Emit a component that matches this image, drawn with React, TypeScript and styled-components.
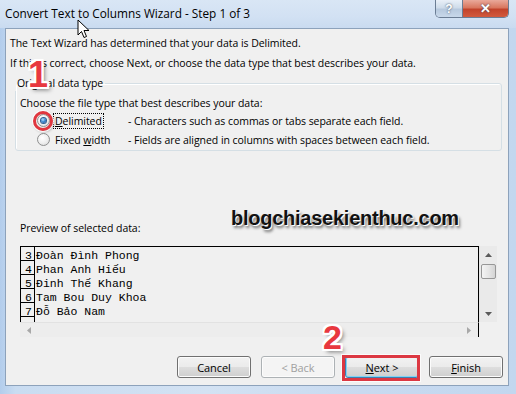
import React from "react";
import styled, { createGlobalStyle } from "styled-components";

const GlobalStyle = createGlobalStyle`
  html, body { margin: 0; padding: 0; }
  body {
    width: 516px;
    height: 394px;
    overflow: hidden;
    font-family: "Open Sans", "Noto Sans", sans-serif;
    color: #000;
  }
`;

const Window = styled.div`
  position: relative;
  width: 516px;
  height: 394px;
  display: flex;
  flex-direction: column;
  background: linear-gradient(90deg, #b3cdec 0%, #c9dcf1 3%, #d3e2f3 40%, #c8daf0 70%, #c2d7ef 100%);
  overflow: hidden;
`;

const TitleBar = styled.div`
  height: 28px;
  flex: none;
  display: flex;
  align-items: flex-start;
  justify-content: space-between;
  background: linear-gradient(180deg, #d9e6f5 0%, #d2e1f3 60%, #c9dbf0 100%);
`;

const Title = styled.div`
  font-size: 11.8px;
  line-height: 16px;
  padding: 5px 0 0 5px;
`;

const Caption = styled.div`
  display: flex;
  margin-right: 7px;
  height: 17px;
  border: 1px solid #6b7d94;
  border-top: none;
  border-radius: 0 0 5px 5px;
  overflow: hidden;
`;

const CaptionButton = styled.div<{ $close?: boolean }>`
  width: ${(p) => (p.$close ? 45 : 26)}px;
  height: 17px;
  display: flex;
  align-items: center;
  justify-content: center;
  font-family: "Liberation Sans", sans-serif;
  font-weight: bold;
  font-size: ${(p) => (p.$close ? 13 : 12)}px;
  color: #fff;
  text-shadow: 0 0 2px #2c3e56;
  background: ${(p) =>
    p.$close
      ? "linear-gradient(180deg, #e9a99a 0%, #d9775f 45%, #c2432b 55%, #d25a3e 100%)"
      : "linear-gradient(180deg, #e9f0f8 0%, #cfdcea 45%, #b7c9de 55%, #c8d8ea 100%)"};
  & + & {
    border-left: 1px solid #6b7d94;
  }
`;

const Client = styled.div`
  flex: 1;
  margin: 0 7px 8px 5px;
  background: #f0f0f0;
  border: 1px solid #8da2bb;
  display: flex;
  flex-direction: column;
  padding: 6px 6px 0 4px;
  font-size: 10.5px;
  letter-spacing: -0.05px;
`;

const Line = styled.div<{ $gap?: number }>`
  height: 16px;
  line-height: 16px;
  margin-top: ${(p) => p.$gap ?? 0}px;
  white-space: nowrap;
`;

const GroupBox = styled.fieldset`
  margin: 4px 0 0 5px;
  padding: 4px 0 1px 4px;
  border: 1px solid #d5dfe5;
  border-radius: 3px;
  box-shadow: inset 1px 1px 0 #fff;
  min-width: 0;
`;

const Legend = styled.legend`
  line-height: 16px;
  padding: 0 2px;
  margin-left: -5px;
`;

const GroupText = styled.div`
  height: 16px;
  line-height: 16px;
`;

const RadioRow = styled.div`
  height: 19px;
  display: grid;
  grid-template-columns: 13px 68px 1fr;
  column-gap: 5px;
  align-items: center;
  padding-left: 17px;
  white-space: nowrap;
`;

const Radio = styled.span<{ $checked?: boolean }>`
  width: 13px;
  height: 13px;
  box-sizing: border-box;
  border-radius: 50%;
  border: 1px solid #8e8f8f;
  background: radial-gradient(circle at 40% 35%, #ffffff 0%, #f0f0f0 50%, #d6d6d6 100%);
  display: flex;
  align-items: center;
  justify-content: center;
  &::after {
    content: "";
    display: ${(p) => (p.$checked ? "block" : "none")};
    width: 5px;
    height: 5px;
    border-radius: 50%;
    background: radial-gradient(circle at 40% 35%, #bfe3ff 0%, #3d8ad2 45%, #134a86 100%);
    box-shadow: 0 0 0 1px #2c5d8f;
  }
`;

const Label = styled.span<{ $focus?: boolean }>`
  justify-self: start;
  line-height: 14px;
  padding: 0 1px;
  margin-left: -1px;
  outline: ${(p) => (p.$focus ? "1px dotted #000" : "none")};
`;

const Key = styled.span`
  text-decoration: underline;
  text-underline-offset: 1px;
`;

const PreviewLabel = styled.div`
  height: 16px;
  line-height: 16px;
  margin: 69px 0 0 10px;
`;

const Preview = styled.div`
  margin: 10px 0 0 10px;
  width: 477px;
  height: 91px;
  display: grid;
  grid-template-columns: 459px 18px;
  grid-template-rows: 76px 15px;
`;

const DataArea = styled.div`
  border: 1px solid #000;
  border-bottom: none;
  overflow: hidden;
  font-family: "Liberation Mono", "DejaVu Sans Mono", monospace;
  font-size: 11.5px;
  letter-spacing: 0;
`;

const DataRow = styled.div`
  display: flex;
  height: 14px;
`;

const RowNum = styled.div`
  width: 14px;
  height: 14px;
  box-sizing: border-box;
  border-right: 1px solid #000;
  border-bottom: 1px solid #000;
  text-align: right;
  padding: 3px 2px 0 0;
  line-height: 12px;
  flex: none;
`;

const RowText = styled.div`
  padding: 3px 0 0 1px;
  line-height: 12px;
  white-space: pre;
`;

const VScroll = styled.div`
  border-left: 1px solid #e6e6e6;
  background: #eaeaea;
  display: flex;
  flex-direction: column;
  align-items: center;
`;

const ArrowBox = styled.div`
  height: 17px;
  width: 17px;
  display: flex;
  align-items: center;
  justify-content: center;
  flex: none;
`;

const Thumb = styled.div`
  width: 15px;
  height: 15px;
  box-sizing: border-box;
  margin-top: 1px;
  border: 1px solid #979797;
  border-radius: 2px;
  background: linear-gradient(90deg, #f4f4f4 0%, #e6e6e6 50%, #d4d4d4 100%);
`;

const Track = styled.div`
  flex: 1;
`;

const HScroll = styled.div`
  border-top: 1px solid #e2e2e2;
  border-right: 1px solid #000;
  background: #ededed;
  display: flex;
  justify-content: space-between;
  align-items: center;
  padding: 0 7px;
`;

const Corner = styled.div`
  background: #f0f0f0;
`;

const ButtonRow = styled.div`
  display: flex;
  justify-content: flex-end;
  gap: 10px;
  margin: 19px -1px 0 0;
`;

const Button = styled.div<{ $disabled?: boolean; $default?: boolean }>`
  width: 74px;
  height: 22px;
  box-sizing: border-box;
  border-radius: 3px;
  display: flex;
  align-items: center;
  justify-content: center;
  font-size: 11px;
  border: 1px solid ${(p) => (p.$disabled ? "#adb2b5" : p.$default ? "#3c7fb1" : "#707070")};
  color: ${(p) => (p.$disabled ? "#a0a0a0" : "#000")};
  background: ${(p) =>
    p.$disabled
      ? "#f4f4f4"
      : "linear-gradient(180deg, #f2f2f2 0%, #ebebeb 48%, #dddddd 52%, #cfcfcf 100%)"};
  box-shadow: ${(p) => (p.$default ? "inset 0 0 0 1px #7fd3f5" : "inset 0 0 0 1px #fcfcfc")};
`;

const Watermark = styled.div`
  position: absolute;
  left: 231px;
  top: 207px;
  font-family: "Liberation Sans", Arial, sans-serif;
  font-weight: bold;
  font-size: 20px;
  color: #121212;
  text-shadow: 1px 1px 0 #fff, 2px 3px 3px rgba(0, 0, 0, 0.55);
  letter-spacing: -0.25px;
`;

const Marker = styled.div<{ $x: number; $y: number; $size: number }>`
  position: absolute;
  left: ${(p) => p.$x}px;
  top: ${(p) => p.$y}px;
  font-family: "Liberation Sans", Arial, sans-serif;
  font-weight: bold;
  font-size: ${(p) => p.$size}px;
  line-height: 1;
  color: #e8383f;
  text-shadow: -2px 0 0 #fff, 2px 0 0 #fff, 0 -2px 0 #fff, 0 2px 0 #fff, -2px -2px 0 #fff,
    2px 2px 0 #fff, -2px 2px 0 #fff, 2px -2px 0 #fff, 3px 3px 4px rgba(0, 0, 0, 0.5);
`;

const Ring = styled.div`
  position: absolute;
  left: 33px;
  top: 111px;
  width: 20px;
  height: 20px;
  box-sizing: border-box;
  border-radius: 50%;
  border: 3px solid #e0373f;
  box-shadow: 0 0 0 1px rgba(255, 255, 255, 0.9), 1px 1px 3px rgba(0, 0, 0, 0.35);
`;

const Highlight = styled.div`
  position: absolute;
  left: 342px;
  top: 355px;
  width: 78px;
  height: 26px;
  box-sizing: border-box;
  border: 3px solid #dc3842;
  box-shadow: 0 0 0 1px rgba(255, 255, 255, 0.7);
`;

const Cursor = styled.svg`
  position: absolute;
  left: 77px;
  top: 19px;
`;

const Tri = ({ dir }: { dir: "up" | "down" | "left" | "right" }) => {
  const pts = {
    up: "0,4 3.5,0 7,4",
    down: "0,0 3.5,4 7,0",
    left: "4,0 0,3.5 4,7",
    right: "0,0 4,3.5 0,7",
  }[dir];
  const vertical = dir === "up" || dir === "down";
  return (
    <svg width={vertical ? 7 : 4} height={vertical ? 4 : 7}>
      <polygon points={pts} fill={vertical ? "#5a5a5a" : "#a8a8a8"} />
    </svg>
  );
};

const rows = [
  ["3", "Đoàn Đình Phong"],
  ["4", "Phan Anh Hiếu"],
  ["5", "Đinh Thế Khang"],
  ["6", "Tam Bou Duy Khoa"],
  ["7", "Đỗ Bảo Nam"],
  ["", ""],
];

export default function App() {
  return (
    <Window>
      <GlobalStyle />
      <TitleBar>
        <Title>Convert Text to Columns Wizard - Step 1 of 3</Title>
        <Caption>
          <CaptionButton>?</CaptionButton>
          <CaptionButton $close>✕</CaptionButton>
        </Caption>
      </TitleBar>
      <Client>
        <Line>The Text Wizard has determined that your data is Delimited.</Line>
        <Line $gap={4}>
          If this is correct, choose Next, or choose the data type that best describes your data.
        </Line>
        <GroupBox>
          <Legend>Original data type</Legend>
          <GroupText>Choose the file type that best describes your data:</GroupText>
          <RadioRow>
            <Radio $checked />
            <Label $focus>
              <Key>D</Key>elimited
            </Label>
            <span>- Characters such as commas or tabs separate each field.</span>
          </RadioRow>
          <RadioRow>
            <Radio />
            <Label>
              Fixed <Key>w</Key>idth
            </Label>
            <span>- Fields are aligned in columns with spaces between each field.</span>
          </RadioRow>
        </GroupBox>
        <PreviewLabel>Preview of selected data:</PreviewLabel>
        <Preview>
          <DataArea>
            {rows.map(([n, t], i) => (
              <DataRow key={i}>
                <RowNum>{n}</RowNum>
                <RowText>{t}</RowText>
              </DataRow>
            ))}
          </DataArea>
          <VScroll>
            <ArrowBox>
              <Tri dir="up" />
            </ArrowBox>
            <Thumb />
            <Track />
            <ArrowBox>
              <Tri dir="down" />
            </ArrowBox>
          </VScroll>
          <HScroll>
            <Tri dir="left" />
            <Tri dir="right" />
          </HScroll>
          <Corner />
        </Preview>
        <ButtonRow>
          <Button>Cancel</Button>
          <Button $disabled>&lt; Back</Button>
          <Button $default>
            <span>
              <Key>N</Key>ext &gt;
            </span>
          </Button>
          <Button>
            <span>
              <Key>F</Key>inish
            </span>
          </Button>
        </ButtonRow>
      </Client>
      <Watermark>blogchiasekienthuc.com</Watermark>
      <Marker $x={28} $y={57} $size={36}>
        1
      </Marker>
      <Ring />
      <Marker $x={323} $y={320} $size={34}>
        2
      </Marker>
      <Highlight />
      <Cursor width="14" height="21" viewBox="0 0 14 21">
        <path d="M1 1 L1 16 L4.5 12.5 L7 18.5 L9.5 17.5 L7 11.5 L12 11.5 Z" fill="#fff" stroke="#000" strokeWidth="1" />
      </Cursor>
    </Window>
  );
}
